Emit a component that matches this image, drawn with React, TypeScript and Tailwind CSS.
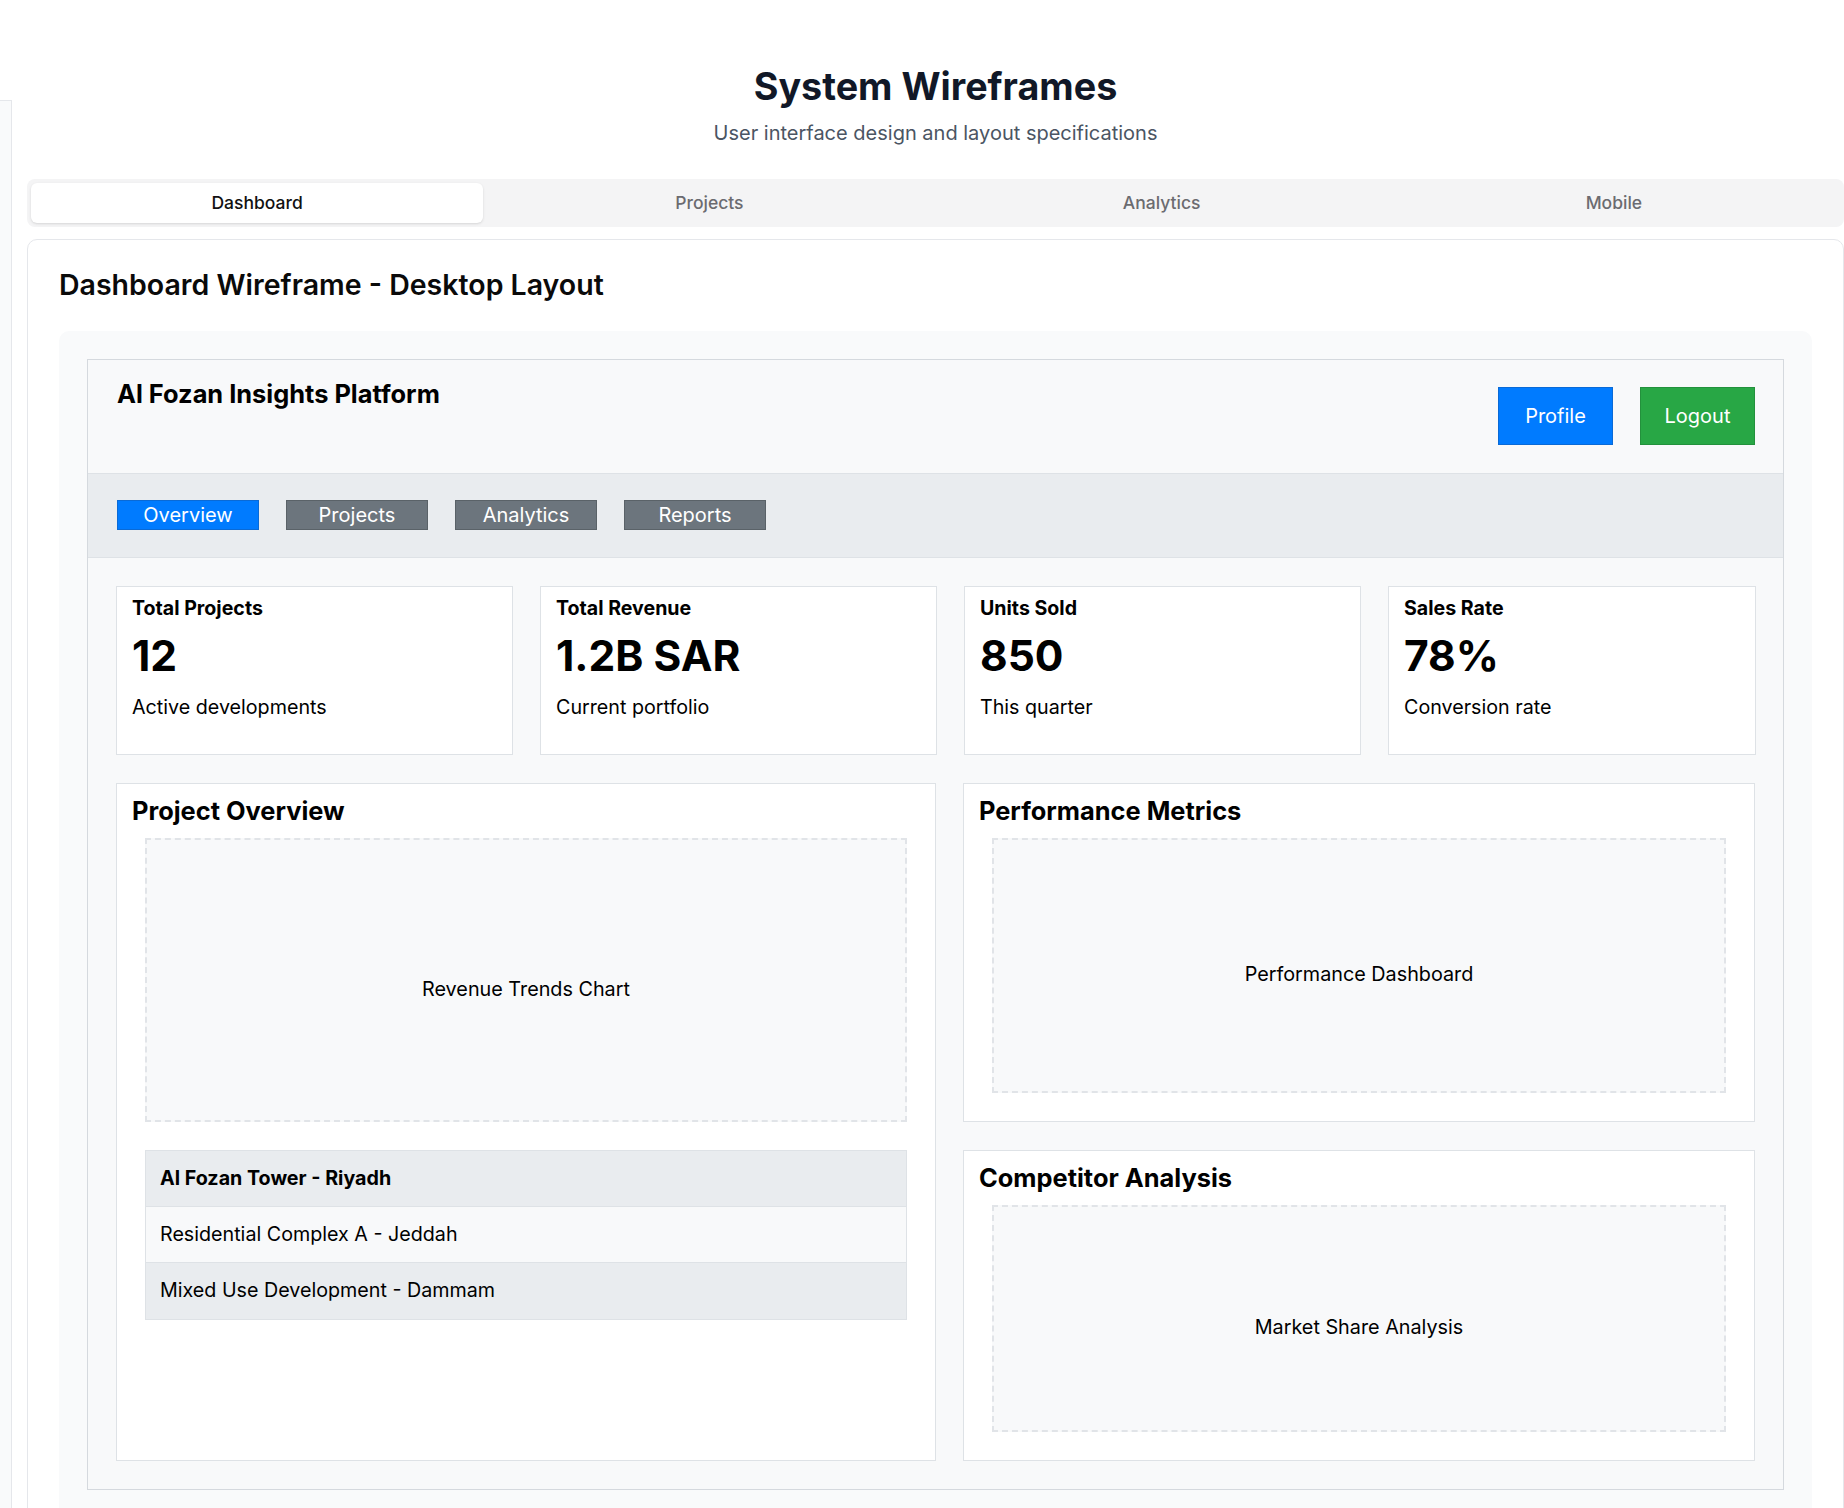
import React from "react";

const font = { fontFamily: "Inter, 'Noto Sans', sans-serif" };

function StatCard({ title, value, sub }: { title: string; value: string; sub: string }) {
  return (
    <div className="h-[169px] bg-white border border-[#dee2e6] pt-[9px] px-[15px] text-black">
      <div className="text-[19.6px] font-bold leading-[24px]">{title}</div>
      <div className="mt-[10px] text-[42.5px] font-bold leading-[52px]">{value}</div>
      <div className="mt-[12px] text-[19.7px] leading-[26px]">{sub}</div>
    </div>
  );
}

function Placeholder({ label, className }: { label: string; className: string }) {
  return (
    <div
      className={
        "mx-[13px] pt-[19px] border-2 border-dashed border-[#e1e4e8] bg-[#f8f9fa] flex items-center justify-center text-[19.8px] text-black " +
        className
      }
    >
      {label}
    </div>
  );
}

export default function App() {
  return (
    <div className="relative min-h-[1508px] bg-white overflow-hidden" style={font}>
      <div className="absolute left-0 top-[100px] w-[12px] h-[1408px] bg-[#f9fafb] border-t border-r border-[#e5e7eb]" />
      <div className="ml-[27px] pt-[63px]">
        <div className="text-center">
          <h1 className="text-[37.7px] font-bold leading-[46px] text-[#111827]">System Wireframes</h1>
          <p className="mt-[10px] text-[20px] leading-[28px] text-[#4b5563]">
            User interface design and layout specifications
          </p>
        </div>

        <div className="mt-[32px] h-[48px] rounded-[8px] bg-[#f4f4f5] p-[4px] grid grid-cols-4">
          <div className="rounded-[6px] bg-white shadow-sm flex items-center justify-center text-[17.5px] font-medium text-[#111]">
            Dashboard
          </div>
          <div className="flex items-center justify-center text-[17.5px] font-medium text-[#6b6b70]">Projects</div>
          <div className="flex items-center justify-center text-[17.5px] font-medium text-[#6b6b70]">Analytics</div>
          <div className="flex items-center justify-center text-[17.5px] font-medium text-[#6b6b70]">Mobile</div>
        </div>

        <div className="mt-[12px] rounded-[10px] border border-[#e5e7eb] bg-white pt-[29px] pl-[31px] pr-[31px] h-[1300px]">
          <h2 className="text-[28.5px] font-semibold leading-[32px] text-[#0a0a0a]">
            Dashboard Wireframe - Desktop Layout
          </h2>
          <div className="mt-[30px] rounded-[10px] bg-[#f9fafb] p-[28px]">
            <div className="border border-[#d5d9de] bg-[#f8f9fa]">
              {/* Header */}
              <div className="flex items-start justify-between pl-[29px] pr-[28px] pt-[27px] pb-[28px] border-b border-[#dee2e6]">
                <div className="-mt-[8px] text-[25.4px] font-bold leading-[30px] text-black">
                  Al Fozan Insights Platform
                </div>
                <div className="flex gap-[27px]">
                  <button className="w-[115px] h-[58px] bg-[#007bff] border border-[#0a6ad6] text-white text-[20px]">
                    Profile
                  </button>
                  <button className="w-[115px] h-[58px] bg-[#28a745] border border-[#23913c] text-white text-[20px]">
                    Logout
                  </button>
                </div>
              </div>

              {/* Nav */}
              <div className="bg-[#e9ecef] px-[29px] pt-[26px] pb-[27px] border-b border-[#dee2e6] flex gap-[27px]">
                <button className="w-[142px] h-[30px] bg-[#007bff] border border-[#0a6ad6] text-white text-[20px] leading-none">
                  Overview
                </button>
                <button className="w-[142px] h-[30px] bg-[#6c757d] border border-[#5a6268] text-white text-[20px] leading-none">
                  Projects
                </button>
                <button className="w-[142px] h-[30px] bg-[#6c757d] border border-[#5a6268] text-white text-[20px] leading-none">
                  Analytics
                </button>
                <button className="w-[142px] h-[30px] bg-[#6c757d] border border-[#5a6268] text-white text-[20px] leading-none">
                  Reports
                </button>
              </div>

              {/* Content */}
              <div className="p-[28px]">
                <div className="grid grid-cols-[397px_397px_397px_368px] gap-[27px]">
                  <StatCard title="Total Projects" value="12" sub="Active developments" />
                  <StatCard title="Total Revenue" value="1.2B SAR" sub="Current portfolio" />
                  <StatCard title="Units Sold" value="850" sub="This quarter" />
                  <StatCard title="Sales Rate" value="78%" sub="Conversion rate" />
                </div>

                <div className="mt-[28px] grid grid-cols-[820px_792px] grid-rows-[339px_311px] gap-x-[27px] gap-y-[28px]">
                  <div className="row-span-2 bg-white border border-[#dee2e6] pt-[12px] px-[15px] flex flex-col">
                    <h3 className="text-[25.4px] font-bold leading-[30px] text-black">Project Overview</h3>
                    <Placeholder label="Revenue Trends Chart" className="mt-[12px] h-[284px]" />
                    <div className="mt-[28px] mx-[13px] border border-[#dee2e6] text-[19.7px] text-black">
                      <div className="h-[56px] flex items-center px-[14px] bg-[#e9ecef] font-bold border-b border-[#dee2e6]">
                        Al Fozan Tower - Riyadh
                      </div>
                      <div className="h-[56px] flex items-center px-[14px] bg-[#f8f9fa] border-b border-[#dee2e6]">
                        Residential Complex A - Jeddah
                      </div>
                      <div className="h-[56px] flex items-center px-[14px] bg-[#e9ecef]">
                        Mixed Use Development - Dammam
                      </div>
                    </div>
                  </div>

                  <div className="bg-white border border-[#dee2e6] pt-[12px] px-[15px] pb-[15px] flex flex-col">
                    <h3 className="text-[25.4px] font-bold leading-[30px] text-black">Performance Metrics</h3>
                    <Placeholder label="Performance Dashboard" className="mt-[12px] mb-[13px] flex-1" />
                  </div>

                  <div className="bg-white border border-[#dee2e6] pt-[12px] px-[15px] pb-[15px] flex flex-col">
                    <h3 className="text-[25.4px] font-bold leading-[30px] text-black">Competitor Analysis</h3>
                    <Placeholder label="Market Share Analysis" className="mt-[12px] mb-[13px] flex-1" />
                  </div>
                </div>
              </div>
            </div>
          </div>
        </div>
      </div>
    </div>
  );
}
